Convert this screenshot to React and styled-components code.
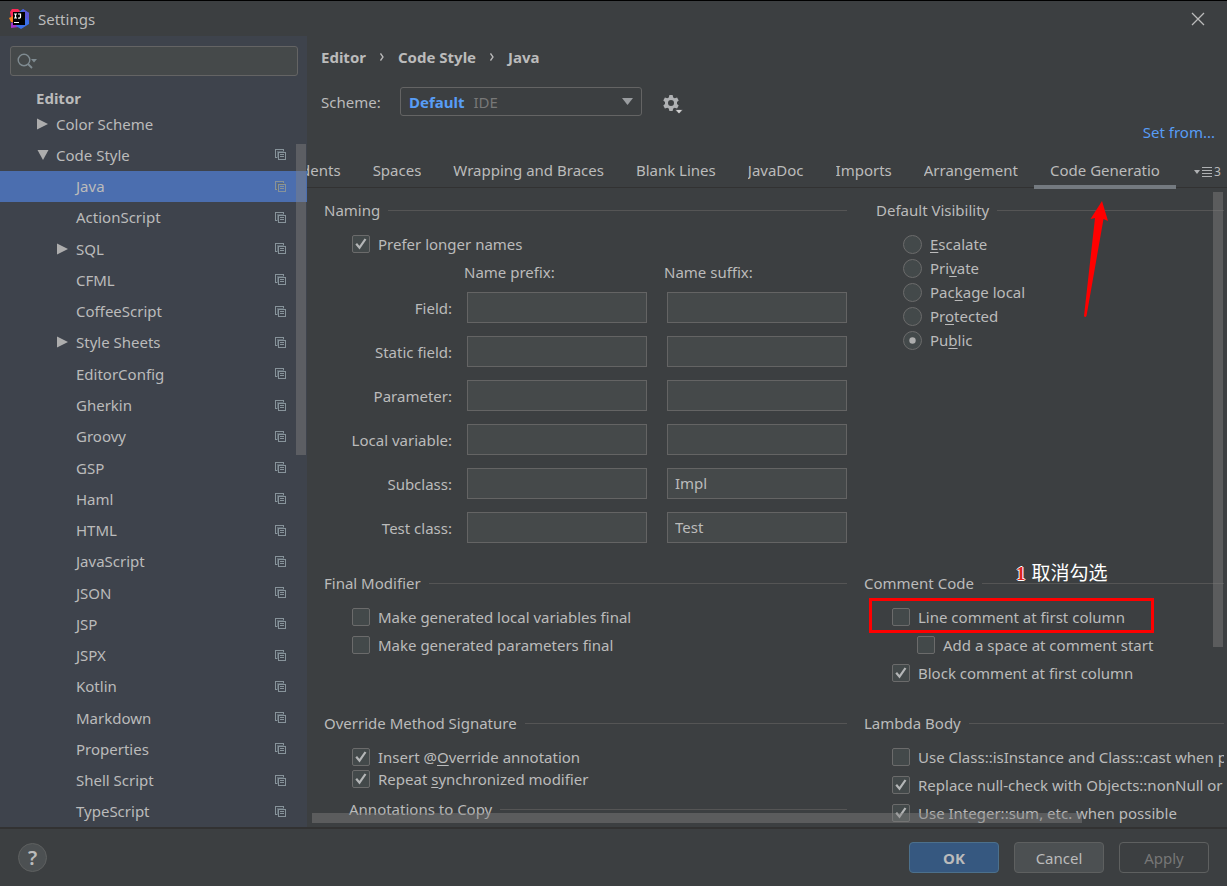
import React, { useState } from "react";
import styled, { createGlobalStyle, css } from "styled-components";

const GlobalStyle = createGlobalStyle`
  * {
    box-sizing: border-box;
  }

  body {
    margin: 0;
    background: #3c3f41;
    color: #bbbbbb;
    font-family: "Noto Sans", "Noto Sans CJK SC", sans-serif;
    font-size: 15px;
    line-height: 20px;
  }

  button, input, select {
    font: inherit;
    color: inherit;
    margin: 0;
  }
`;

const Dialog = styled.div`
  display: flex;
  flex-direction: column;
  height: 100vh;
  border-top: 1px solid #000000;
  overflow: hidden;
`;

const TitleBar = styled.header`
  display: flex;
  align-items: center;
  gap: 9px;
  height: 35px;
  padding: 0 22px 0 9px;
  flex-shrink: 0;
`;

const WindowTitle = styled.h1`
  flex: 1;
  margin: 0;
  font-size: 15px;
  font-weight: 400;
`;

const IconButton = styled.button`
  display: flex;
  padding: 0;
  border: 0;
  background: none;
  color: #afb1b3;
`;

const Body = styled.div`
  display: flex;
  flex: 1;
  min-height: 0;
`;

const Sidebar = styled.aside`
  position: relative;
  display: flex;
  flex-direction: column;
  width: 307px;
  flex-shrink: 0;
  background: #3e434c;
`;

const SearchBox = styled.label`
  display: flex;
  align-items: center;
  height: 30px;
  margin: 10px 9px 0 10px;
  padding: 0 6px;
  border: 1px solid #646464;
  border-radius: 3px;
  background: #45494a;
`;

const SearchInput = styled.input`
  flex: 1;
  min-width: 0;
  border: 0;
  outline: 0;
  background: none;
`;

const TreeHeading = styled.h2`
  margin: 12px 0 0 36px;
  font-size: 15px;
  font-weight: 700;
`;

const Tree = styled.ul`
  display: flex;
  flex-direction: column;
  flex: 1;
  margin: 0;
  padding: 0;
  list-style: none;
`;

const TreeRow = styled.li`
  display: flex;
  align-items: center;
  flex: 1;
  padding: 0 21px 0 ${(props) => 37 + props.$depth * 20}px;
  background: ${(props) => (props.$selected ? "#4b6eaf" : "none")};
`;

const TreeArrow = styled.span`
  display: flex;
  width: 19px;
`;

const TreeLabel = styled.span`
  flex: 1;
`;

const ScrollThumb = styled.div`
  position: absolute;
  background: rgba(128, 128, 128, 0.45);
  ${(props) =>
    props.$horizontal
      ? css`
          left: 0;
          right: 142px;
          bottom: 4px;
          height: 10px;
        `
      : css`
          right: 1px;
          top: ${props.$top}px;
          width: 10px;
          height: ${props.$length}px;
        `}
`;

const Main = styled.main`
  display: flex;
  flex-direction: column;
  flex: 1;
  min-width: 0;
`;

const Breadcrumbs = styled.nav`
  display: flex;
  align-items: center;
  gap: 14px;
  padding: 11px 14px 0;
  font-weight: 700;
`;

const SchemeRow = styled.div`
  display: flex;
  align-items: center;
  margin-top: 20px;
  padding: 0 14px;
`;

const SchemeLabel = styled.label`
  width: 79px;
`;

const SchemeBox = styled.div`
  display: grid;
  align-items: center;
  width: 242px;
  height: 29px;
  margin-right: 21px;

  > * {
    grid-area: 1 / 1;
  }
`;

const SchemeSelect = styled.select`
  width: 100%;
  height: 100%;
  appearance: none;
  border: 1px solid #646464;
  border-radius: 3px;
  background: #3c3f41;
  color: transparent;

  option {
    color: #bbbbbb;
  }
`;

const SchemeValue = styled.div`
  display: flex;
  align-items: center;
  gap: 9px;
  padding: 0 9px;
  color: #787878;
  pointer-events: none;

  strong {
    color: #589df6;
  }

  svg {
    margin-left: auto;
  }
`;

const SetFrom = styled.a`
  align-self: flex-end;
  margin: 6px 12px 0 0;
  color: #589df6;
  text-decoration: none;
`;

const TabBar = styled.div`
  position: relative;
  display: flex;
  height: 37px;
  margin-top: 10px;
  flex-shrink: 0;

  &::before {
    content: "";
    position: absolute;
    left: 0;
    right: 0;
    bottom: 1px;
    height: 1px;
    background: #323232;
  }
`;

const TabList = styled.div`
  position: relative;
  display: flex;
  justify-content: flex-end;
  flex: 1;
  min-width: 0;
  overflow: hidden;
`;

const Tab = styled.button`
  flex-shrink: 0;
  padding: 2px 16px 0;
  border: 0;
  border-bottom: 4px solid ${(props) => (props.$active ? "#747a80" : "transparent")};
  background: none;
  white-space: nowrap;

  span {
    display: block;
    overflow: hidden;
    max-width: ${(props) => (props.$active ? "110px" : "none")};
  }
`;

const HiddenTabs = styled.button`
  display: flex;
  align-items: center;
  gap: 2px;
  width: 51px;
  padding: 3px 0 0 18px;
  border: 0;
  background: none;
  font-size: 12px;
`;

const Viewport = styled.div`
  position: relative;
  flex: 1;
  min-height: 0;
  margin: 0 3px 0 5px;
  overflow: hidden;
`;

const Panels = styled.div`
  display: grid;
  grid-template-columns: minmax(0, 523fr) minmax(0, 360fr);
  gap: 30px 17px;
  padding: 11px 0 0 12px;
`;

const Group = styled.section`
  position: relative;
  padding-left: ${(props) => props.$indent || 0}px;
`;

const GroupTitle = styled.h3`
  display: flex;
  align-items: center;
  gap: 8px;
  margin: 0 0 14px;
  font-size: 15px;
  font-weight: 400;
  white-space: nowrap;

  &::after {
    content: "";
    flex: 1;
    height: 1px;
    background: #555555;
  }
`;

const SubGroup = styled.div`
  margin-top: 10px;
  padding-left: 25px;
`;

const Options = styled.div`
  display: flex;
  flex-direction: column;
  gap: ${(props) => props.$gap}px;
  padding-left: ${(props) => props.$indent}px;
`;

const OptionLabel = styled.label`
  display: flex;
  align-items: center;
  gap: 8px;
  height: 20px;
  margin-left: ${(props) => (props.$nested ? 25 : 0)}px;
  white-space: nowrap;

  u {
    text-underline-offset: 2px;
  }
`;

const Mark = styled.span`
  display: grid;
  flex-shrink: 0;

  > * {
    grid-area: 1 / 1;
  }

  svg {
    visibility: hidden;
    pointer-events: none;
  }

  input:checked + svg {
    visibility: visible;
  }
`;

const Tick = styled.input`
  width: 18px;
  height: 18px;
  appearance: none;
  border: 1px solid #6b6b6b;
  border-radius: 2px;
  background: #43494a;
`;

const Radio = styled(Tick)`
  width: 19px;
  height: 19px;
  border-radius: 50%;
`;

const NamingTable = styled.table`
  width: 100%;
  margin-top: 8px;
  border-collapse: collapse;
  table-layout: fixed;

  th {
    padding: 0;
    font-weight: 400;
    text-align: right;
  }

  thead th {
    padding-bottom: 10px;
    text-align: left;
  }

  td {
    padding: 0 0 13px 20px;
  }

  tbody th {
    padding-bottom: 13px;
  }

  tbody tr:last-child > * {
    padding-bottom: 0;
  }

  col:first-child {
    width: 123px;
  }
`;

const HeadText = styled.span`
  padding-left: 17px;
`;

const RowLabel = styled.span`
  display: block;
  margin-right: -5px;
`;

const NameInput = styled.input`
  display: block;
  width: 100%;
  height: 31px;
  padding: 0 7px 1px;
  border: 1px solid #646464;
  outline: 0;
  background: #45494a;
`;

const Highlight = styled.div`
  position: absolute;
  left: 5px;
  top: 25px;
  width: 285px;
  height: 35px;
  border: 3px solid #ff0000;
  pointer-events: none;
`;

const Note = styled.div`
  position: absolute;
  left: 152px;
  top: -11px;
  color: #ffffff;
  font-family: "Noto Sans CJK SC", sans-serif;
  font-size: 19px;
  white-space: nowrap;

  b {
    margin-right: 6px;
    color: #e02020;
    font-family: "Liberation Serif", serif;
    text-shadow: 1px 0 #ffffff, -1px 0 #ffffff, 0 1px #ffffff, 0 -1px #ffffff;
  }
`;

const Arrow = styled.svg`
  position: absolute;
  left: 219px;
  top: 0;
  pointer-events: none;
`;

const Footer = styled.footer`
  display: flex;
  align-items: center;
  gap: 15px;
  height: 59px;
  padding: 0 18px;
  border-top: 2px solid #323232;
  flex-shrink: 0;
`;

const HelpButton = styled.button`
  width: 29px;
  height: 29px;
  margin-right: auto;
  padding: 0;
  border: 1px solid #5e6060;
  border-radius: 50%;
  background: #4c5052;
  font-size: 20px;
  font-weight: 600;
`;

const DialogButton = styled.button`
  width: 90px;
  height: 31px;
  padding: 0;
  border: 1px solid ${(props) => (props.$primary ? "#4c708c" : "#5e6060")};
  border-radius: 4px;
  background: ${(props) => (props.$primary ? "#365880" : "#4c5052")};
  font-weight: ${(props) => (props.$primary ? 700 : 400)};

  &:disabled {
    background: none;
    color: #777777;
  }
`;

const treeItems = [
  { name: "Color Scheme", depth: 0, arrow: "right", noCopy: true },
  { name: "Code Style", depth: 0, arrow: "down" },
  { name: "Java", depth: 1 },
  { name: "ActionScript", depth: 1 },
  { name: "SQL", depth: 1, arrow: "right" },
  { name: "CFML", depth: 1 },
  { name: "CoffeeScript", depth: 1 },
  { name: "Style Sheets", depth: 1, arrow: "right" },
  { name: "EditorConfig", depth: 1 },
  { name: "Gherkin", depth: 1 },
  { name: "Groovy", depth: 1 },
  { name: "GSP", depth: 1 },
  { name: "Haml", depth: 1 },
  { name: "HTML", depth: 1 },
  { name: "JavaScript", depth: 1 },
  { name: "JSON", depth: 1 },
  { name: "JSP", depth: 1 },
  { name: "JSPX", depth: 1 },
  { name: "Kotlin", depth: 1 },
  { name: "Markdown", depth: 1 },
  { name: "Properties", depth: 1 },
  { name: "Shell Script", depth: 1 },
  { name: "TypeScript", depth: 1 },
];

const tabs = [
  "Tabs and Indents",
  "Spaces",
  "Wrapping and Braces",
  "Blank Lines",
  "JavaDoc",
  "Imports",
  "Arrangement",
  "Code Generation",
];

const nameRows = [
  { label: "Field:", suffix: "" },
  { label: "Static field:", suffix: "" },
  { label: "Parameter:", suffix: "" },
  { label: "Local variable:", suffix: "" },
  { label: "Subclass:", suffix: "Impl" },
  { label: "Test class:", suffix: "Test" },
];

const visibilities = [
  ["", "E", "scalate"],
  ["Pri", "v", "ate"],
  ["Pac", "k", "age local"],
  ["Pr", "o", "tected"],
  ["Pu", "b", "lic"],
];

const Logo = () => (
  <svg width="20" height="20" viewBox="0 0 20 20">
    <path d="M1 3 L3 0 L9 0 L12 3 L10 12 L2 8 Z" fill="#fe2857" />
    <path d="M0 9 L4 7 L6 14 L2 13 Z" fill="#fc801d" />
    <path d="M2 14 L8 12 L10 18 L2 19 Z" fill="#a133c8" />
    <path d="M10 3 L14 0 L20 4 L20 15 L12 20 L7 17 Z" fill="#3b6fe8" />
    <path d="M14 0 L20 4 L20 12 L13 6 Z" fill="#5a55d6" />
    <rect x="4" y="3" width="12" height="13" fill="#000000" />
    <path
      d="M5 5 H8 M6.500 5 V9 M5 9 H8 M9 5 H11.500 V8 Q11.500 9.300 9 9"
      stroke="#ffffff"
      strokeWidth="1.200"
      fill="none"
    />
    <path d="M5 13.500 H10" stroke="#ffffff" strokeWidth="1" />
  </svg>
);

const SearchIcon = () => (
  <svg width="22" height="16" viewBox="0 0 22 16">
    <circle cx="7" cy="7" r="5.800" fill="none" stroke="#7f8b91" strokeWidth="1.400" />
    <path d="M11 11 L15 15" stroke="#7f8b91" strokeWidth="1.800" />
    <path d="M14 6 H20 L17 9.500 Z" fill="#7f8b91" />
  </svg>
);

const CopyIcon = () => (
  <svg width="11" height="11" viewBox="0 0 11 11" shapeRendering="crispEdges">
    <path d="M2 8.500 H0.500 V0.500 H8.500 V2" fill="none" stroke="#87939a" />
    <path d="M2.500 9 V2.500 H9" fill="none" stroke="#5f6a73" />
    <rect x="3.500" y="3.500" width="7" height="7" fill="none" stroke="#87939a" />
    <path d="M5 5.500 H9 M5 7.500 H9" stroke="#87939a" />
  </svg>
);

const Triangle = ({ direction }) => (
  <svg width="12" height="12" viewBox="0 0 12 12">
    <path
      d={direction === "down" ? "M0.500 1 H11.500 L6 11 Z" : "M0 0.500 V11.500 L11 6 Z"}
      fill="#adadad"
    />
  </svg>
);

const Chevron = () => (
  <svg width="4" height="8" viewBox="0 0 4 8">
    <path d="M0.500 0.500 L3 4 L0.500 7.500" fill="none" stroke="#bbbbbb" strokeWidth="1.300" />
  </svg>
);

const GearIcon = () => (
  <svg width="20" height="24" viewBox="0 -5 20 24">
    <path
      fill="#afb1b3"
      fillRule="evenodd"
      d="M6.400 0 H9.600 L10.200 2.400 L11.700 3.300 L14.100 2.600 L15.700 5.400 L14 7.100 V8.900 L15.700 10.600 L14.100 13.400 L11.700 12.700 L10.200 13.600 L9.600 16 H6.400 L5.800 13.600 L4.300 12.700 L1.900 13.400 L0.300 10.600 L2 8.900 V7.100 L0.300 5.400 L1.900 2.600 L4.300 3.300 L5.800 2.400 Z M8 5 A3 3 0 1 0 8 11 A3 3 0 1 0 8 5 Z"
    />
    <path d="M12 14.500 H20 L16 19 Z" fill="#d0d0d0" stroke="#3c3f41" strokeWidth="0.800" />
  </svg>
);

const Check = () => (
  <svg width="18" height="18" viewBox="0 0 18 18">
    <path d="M4.200 8.800 L7.500 12.700 L13.500 4" fill="none" stroke="#b4b6b7" strokeWidth="2.200" />
  </svg>
);

const CheckOption = ({ checked, nested, children }) => (
  <OptionLabel $nested={nested}>
    <Mark>
      <Tick type="checkbox" defaultChecked={checked} />
      <Check />
    </Mark>
    <span>{children}</span>
  </OptionLabel>
);

const App = () => {
  const [selected, setSelected] = useState("Java");
  const [activeTab, setActiveTab] = useState("Code Generation");

  return (
    <Dialog>
      <GlobalStyle />
      <TitleBar>
        <Logo />
        <WindowTitle>Settings</WindowTitle>
        <IconButton aria-label="Close">
          <svg width="14" height="14" viewBox="0 0 14 14">
            <path d="M1 1 L13 13 M13 1 L1 13" stroke="#bbbbbb" strokeWidth="1.300" />
          </svg>
        </IconButton>
      </TitleBar>

      <Body>
        <Sidebar>
          <SearchBox>
            <SearchIcon />
            <SearchInput type="text" aria-label="Search" />
          </SearchBox>
          <TreeHeading>Editor</TreeHeading>
          <Tree>
            {treeItems.map((item) => (
              <TreeRow
                key={item.name}
                $depth={item.depth}
                $selected={item.name === selected}
                onClick={() => setSelected(item.name)}
              >
                <TreeArrow>{item.arrow && <Triangle direction={item.arrow} />}</TreeArrow>
                <TreeLabel>{item.name}</TreeLabel>
                {!item.noCopy && <CopyIcon />}
              </TreeRow>
            ))}
          </Tree>
          <ScrollThumb $top={108} $length={311} />
        </Sidebar>

        <Main>
          <Breadcrumbs>
            <span>Editor</span>
            <Chevron />
            <span>Code Style</span>
            <Chevron />
            <span>Java</span>
          </Breadcrumbs>

          <SchemeRow>
            <SchemeLabel htmlFor="scheme">Scheme:</SchemeLabel>
            <SchemeBox>
              <SchemeSelect id="scheme">
                <option>Default</option>
              </SchemeSelect>
              <SchemeValue aria-hidden="true">
                <strong>Default</strong>
                <span>IDE</span>
                <svg width="11" height="7" viewBox="0 0 11 7">
                  <path d="M0 0 H11 L5.500 7 Z" fill="#9a9da0" />
                </svg>
              </SchemeValue>
            </SchemeBox>
            <IconButton aria-label="Scheme actions">
              <GearIcon />
            </IconButton>
          </SchemeRow>
          <SetFrom href="#">Set from...</SetFrom>

          <TabBar>
            <TabList role="tablist">
              {tabs.map((tab) => (
                <Tab
                  key={tab}
                  role="tab"
                  aria-selected={tab === activeTab}
                  $active={tab === activeTab}
                  onClick={() => setActiveTab(tab)}
                >
                  <span>{tab}</span>
                </Tab>
              ))}
            </TabList>
            <HiddenTabs aria-label="Show hidden tabs">
              <svg width="18" height="10" viewBox="0 0 18 10">
                <path d="M0 3 H6 L3 7 Z" fill="#afb1b3" />
                <path
                  d="M8 0.500 H18 M8 3.500 H18 M8 6.500 H18 M8 9.500 H18"
                  stroke="#afb1b3"
                />
              </svg>
              3
            </HiddenTabs>
          </TabBar>

          <Viewport>
            <Panels>
              <Group>
                <GroupTitle>Naming</GroupTitle>
                <Options $indent={28}>
                  <CheckOption checked>Prefer longer names</CheckOption>
                </Options>
                <NamingTable>
                  <colgroup>
                    <col />
                    <col />
                    <col />
                  </colgroup>
                  <thead>
                    <tr>
                      <th></th>
                      <th>
                        <HeadText>Name prefix:</HeadText>
                      </th>
                      <th>
                        <HeadText>Name suffix:</HeadText>
                      </th>
                    </tr>
                  </thead>
                  <tbody>
                    {nameRows.map((row) => (
                      <tr key={row.label}>
                        <th>
                          <RowLabel>{row.label}</RowLabel>
                        </th>
                        <td>
                          <NameInput type="text" aria-label={`${row.label} prefix`} />
                        </td>
                        <td>
                          <NameInput
                            type="text"
                            aria-label={`${row.label} suffix`}
                            defaultValue={row.suffix}
                          />
                        </td>
                      </tr>
                    ))}
                  </tbody>
                </NamingTable>
              </Group>

              <Group $indent={12}>
                <GroupTitle>Default Visibility</GroupTitle>
                <Options $indent={27} $gap={4}>
                  {visibilities.map(([before, key, after]) => (
                    <OptionLabel key={before + key}>
                      <Mark>
                        <Radio
                          type="radio"
                          name="visibility"
                          defaultChecked={before === "Pu"}
                        />
                        <svg width="19" height="19" viewBox="0 0 19 19">
                          <circle cx="9.500" cy="9.500" r="3.200" fill="#adadad" />
                        </svg>
                      </Mark>
                      <span>
                        {before}
                        <u>{key}</u>
                        {after}
                      </span>
                    </OptionLabel>
                  ))}
                </Options>
                <Arrow width="28" height="120" viewBox="0 0 28 120">
                  <path
                    d="M19 1 L25 21 L20.500 19 L3.500 116 Q2 118 1 116 L12 18 L7.500 19 Z"
                    fill="#ff0000"
                  />
                </Arrow>
              </Group>

              <Group>
                <GroupTitle>Final Modifier</GroupTitle>
                <Options $indent={28} $gap={8}>
                  <CheckOption>Make generated local variables final</CheckOption>
                  <CheckOption>Make generated parameters final</CheckOption>
                </Options>
              </Group>

              <Group>
                <GroupTitle>Comment Code</GroupTitle>
                <Options $indent={28} $gap={8}>
                  <CheckOption>Line comment at first column</CheckOption>
                  <CheckOption nested>Add a space at comment start</CheckOption>
                  <CheckOption checked>Block comment at first column</CheckOption>
                </Options>
                <Highlight />
                <Note>
                  <b>1</b>
                  取消勾选
                </Note>
              </Group>

              <Group>
                <GroupTitle>Override Method Signature</GroupTitle>
                <Options $indent={28} $gap={2}>
                  <CheckOption checked>
                    Insert @<u>O</u>verride annotation
                  </CheckOption>
                  <CheckOption checked>
                    Repeat <u>s</u>ynchronized modifier
                  </CheckOption>
                </Options>
                <SubGroup>
                  <GroupTitle>Annotations to Copy</GroupTitle>
                </SubGroup>
              </Group>

              <Group>
                <GroupTitle>Lambda Body</GroupTitle>
                <Options $indent={28} $gap={8}>
                  <CheckOption>Use Class::isInstance and Class::cast when possible</CheckOption>
                  <CheckOption checked>
                    Replace null-check with Objects::nonNull or Objects::isNull
                  </CheckOption>
                  <CheckOption checked>Use Integer::sum, etc. when possible</CheckOption>
                </Options>
              </Group>
            </Panels>
            <ScrollThumb $top={3} $length={455} />
            <ScrollThumb $horizontal />
          </Viewport>
        </Main>
      </Body>

      <Footer>
        <HelpButton aria-label="Help">?</HelpButton>
        <DialogButton $primary>OK</DialogButton>
        <DialogButton>Cancel</DialogButton>
        <DialogButton disabled>Apply</DialogButton>
      </Footer>
    </Dialog>
  );
};

export default App;
